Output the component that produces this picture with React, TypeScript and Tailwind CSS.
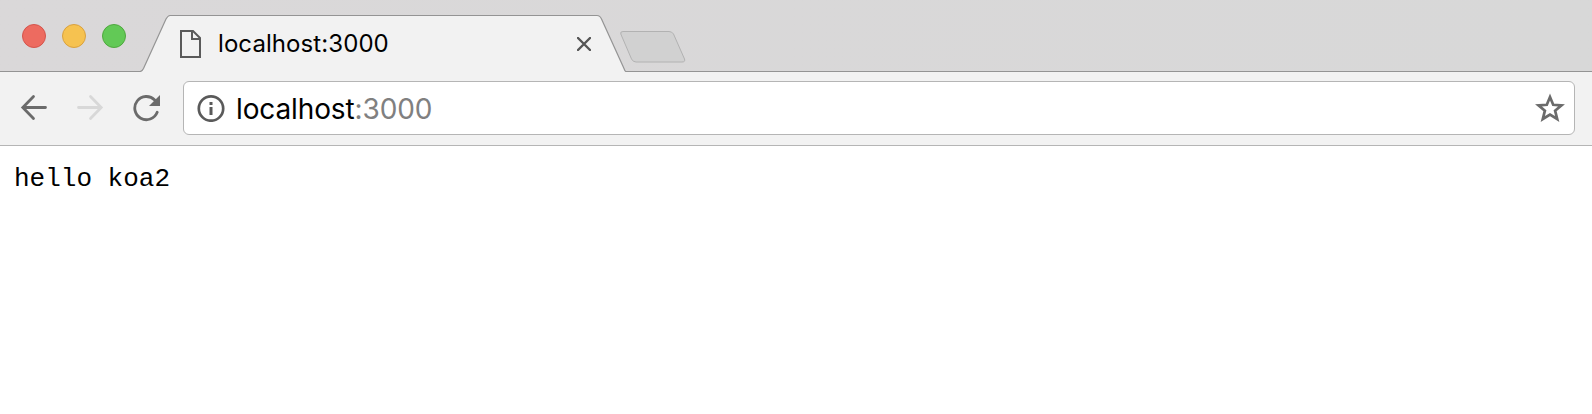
function TrafficLights() {
  return (
    <div className="mt-6 ml-[22px] flex gap-4">
      <span className="size-6 rounded-full border border-[#d4544c] bg-[#ed6b60]" />
      <span className="size-6 rounded-full border border-[#d9a13f] bg-[#f6c250]" />
      <span className="size-6 rounded-full border border-[#4fa83e] bg-[#62c956]" />
    </div>
  );
}

function Tab() {
  return (
    <div className="relative ml-3.5 h-[72px] w-[486px]">
      <svg className="absolute inset-0" width="486" height="72" viewBox="0 0 486 72" fill="none">
        <path d="M0 72V71.5C2 71.5 2.5 70.5 3.5 68.5L26 19Q28 15.5 30 15.5H457Q460 15.5 461.500 19L484 68.500Q485 71.500 486 71.500V72Z" fill="#f2f2f2" />
        <path d="M0 71.5C2 71.5 2.500 70.500 3.500 68.500L26 19Q28 15.500 30 15.500H457Q460 15.500 461.500 19L484 68.500Q485 71.500 486 71.500" stroke="#949494" strokeWidth="1.2" />
      </svg>
      <div className="relative flex h-full items-center pt-4 pl-[39px]">
        <svg width="22" height="28" viewBox="0 0 22 28" fill="none" stroke="#5a5a5a" strokeWidth="2">
          <path d="M2 1H14L21 8V27H2Z" />
          <path d="M13 1V9H21" />
        </svg>
        <span className="ml-[17px] w-[359px] font-['Inter',sans-serif] text-[24px] leading-7 tracking-[0.080px] text-black">localhost:3000</span>
        <svg width="14" height="14" viewBox="0 0 14 14" stroke="#555" strokeWidth="2.4" strokeLinecap="round">
          <path d="M1 1L13 13M13 1L1 13" />
        </svg>
      </div>
    </div>
  );
}

function Toolbar() {
  return (
    <div className="flex h-[74px] items-center border-b border-[#b5b5b5] bg-[#f2f2f2] pb-0.5">
      <svg className="ml-5" width="28" height="28" viewBox="0 0 28 28" fill="none" stroke="#6b6b6b" strokeWidth="2.8" strokeLinecap="round" strokeLinejoin="miter">
        <path d="M25.500 13.500H3M13.500 2.500L2.800 13.500L13.500 24.500" />
      </svg>
      <svg className="ml-7" width="28" height="28" viewBox="0 0 28 28" fill="none" stroke="#d8d8d8" strokeWidth="2.8" strokeLinecap="round">
        <path d="M2.500 13.500H25M14.500 2.500L25.200 13.500L14.500 24.500" />
      </svg>
      <svg className="ml-7" width="30" height="28" viewBox="0 0 30 28" fill="none">
        <path d="M25.200 18.300A11.600 11.600 0 1 1 22.700 6" stroke="#6b6b6b" strokeWidth="2.800" strokeLinecap="round" />
        <path d="M28 1V12H17Z" fill="#6b6b6b" />
      </svg>
      <div className="ml-[21px] flex h-[54px] w-[1392px] items-center rounded-md border border-[#b5b5b5] bg-white pr-[9px] pl-[12.500px]">
        <svg width="28" height="28" viewBox="0 0 28 28" fill="none">
          <circle cx="14" cy="14.500" r="12.200" stroke="#5a5a5a" strokeWidth="2.700" />
          <path d="M12.500 8H15.500V11H12.500ZM12.500 13H15.500V21H12.500Z" fill="#5a5a5a" />
        </svg>
        <span className="mt-0.5 ml-[11.500px] font-['Inter',sans-serif] text-[28px] leading-8 tracking-[-0.120px] text-black">
          localhost<span className="text-[#808080]">:3000</span>
        </span>
        <svg className="ml-auto" width="30" height="30" viewBox="0 0 30 30" fill="none" stroke="#6b6b6b" strokeWidth="2.700">
          <path d="M15 4L18.200 11.800L26.500 12.400L20.100 17.700L22.200 26L15 21.500L7.800 26L9.900 17.700L3.500 12.400L11.800 11.800Z" />
        </svg>
      </div>
    </div>
  );
}

export default function App() {
  return (
    <div className="h-[414px] w-[1592px] overflow-hidden bg-white">
      <div className="flex h-[72px] border-b border-[#949494] bg-linear-to-r from-[#dad8d9] to-[#d8d8d8]">
        <TrafficLights />
        <Tab />
        <svg className="mt-[31px] -ml-1.5" width="66" height="32" viewBox="0 0 66 32">
          <path d="M3 0.500H49Q52 0.500 53.500 3L64.500 28Q65.500 31 62 31H16Q13 31 11.500 28L0.800 3Q0 0.500 3 0.500Z" fill="#d1d1d1" stroke="#b2b2b2" />
        </svg>
      </div>
      <Toolbar />
      <main className="pt-4 pl-[14px]">
        <pre className="font-['Liberation_Mono',monospace] text-[26px] leading-[34px] text-black">hello koa2</pre>
      </main>
    </div>
  );
}
